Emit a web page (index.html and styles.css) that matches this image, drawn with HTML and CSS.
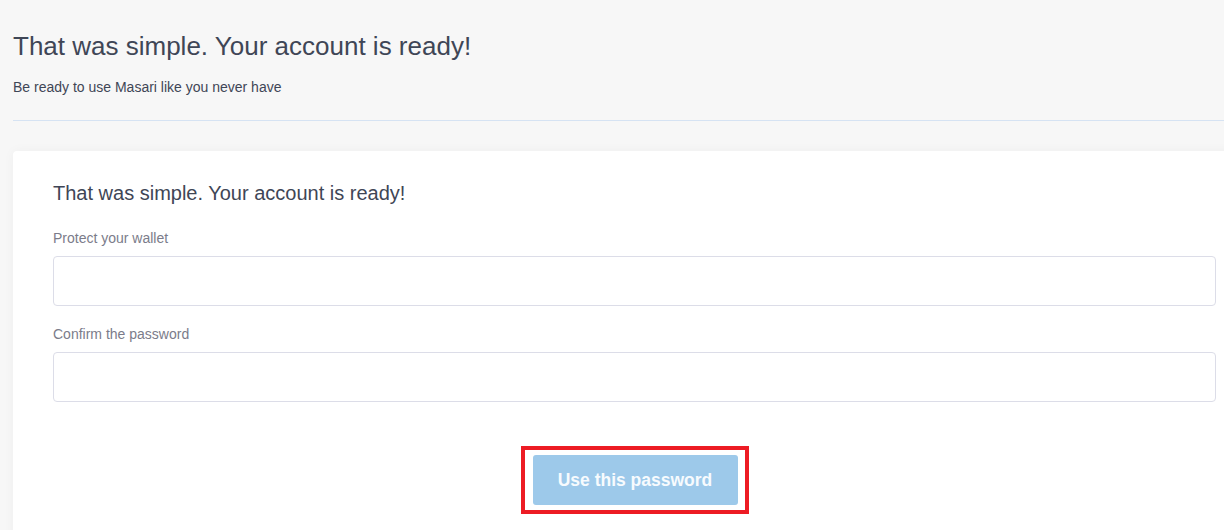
FILE: index.html
```html
<!DOCTYPE html>
<html>
<head>
<meta charset="utf-8">
<link rel="stylesheet" href="styles.css">
</head>
<body>
<div class="page">
  <header class="head">
    <h1 class="title">That was simple. Your account is ready!</h1>
    <p class="subtitle">Be ready to use Masari like you never have</p>
  </header>
  <hr class="divider">
  <section class="card">
    <h2 class="card-title">That was simple. Your account is ready!</h2>
    <label class="label">Protect your wallet</label>
    <input class="field" type="password">
    <label class="label">Confirm the password</label>
    <input class="field" type="password">
    <div class="actions">
      <div class="highlight">
        <button class="btn">Use this password</button>
      </div>
    </div>
  </section>
</div>
</body>
</html>
```

FILE: styles.css
```css
html, body {
  margin: 0;
  padding: 0;
  background: #f7f7f7;
  overflow: hidden;
  font-family: "Liberation Sans", Arial, sans-serif;
}
.page {
  width: 1260px;
  padding: 0 0 0 13px;
}
.head {
  padding-top: 30px;
}
.title {
  margin: 0;
  font-size: 26px;
  font-weight: normal;
  line-height: 32px;
  color: #3f4656;
}
.subtitle {
  margin: 17px 0 0 0;
  font-size: 14px;
  line-height: 16px;
  color: #3f4656;
}
.divider {
  margin: 25px 0 0 0;
  border: 0;
  border-top: 1px solid #d6e3f3;
  height: 0;
}
.card {
  margin-top: 30px;
  background: #fff;
  border-radius: 4px;
  box-shadow: 0 0 12px rgba(0, 0, 0, 0.04);
  padding: 29px 40px 40px 40px;
  display: flex;
  flex-direction: column;
  width: 1163px;
}
.card-title {
  margin: 0;
  font-size: 20px;
  font-weight: normal;
  line-height: 26px;
  color: #3f4656;
}
.label {
  margin-top: 24px;
  font-size: 14px;
  line-height: 16px;
  color: #7b7c8a;
}
.field {
  margin-top: 10px;
  height: 50px;
  box-sizing: border-box;
  border: 1px solid #dcdde8;
  border-radius: 4px;
  background: #fff;
  outline: none;
  padding: 0 12px;
}
.field + .label {
  margin-top: 20px;
}
.actions {
  display: flex;
  justify-content: center;
  margin-top: 44px;
}
.highlight {
  border: 4px solid #ed1c24;
  padding: 5px 7px 5px 8px;
}
.btn {
  display: block;
  width: 205px;
  height: 50px;
  border: 0;
  border-radius: 3px;
  background: #9dc9ea;
  color: #f7fbfe;
  font-family: "Liberation Sans", Arial, sans-serif;
  font-weight: bold;
  font-size: 17.5px;
}
```
